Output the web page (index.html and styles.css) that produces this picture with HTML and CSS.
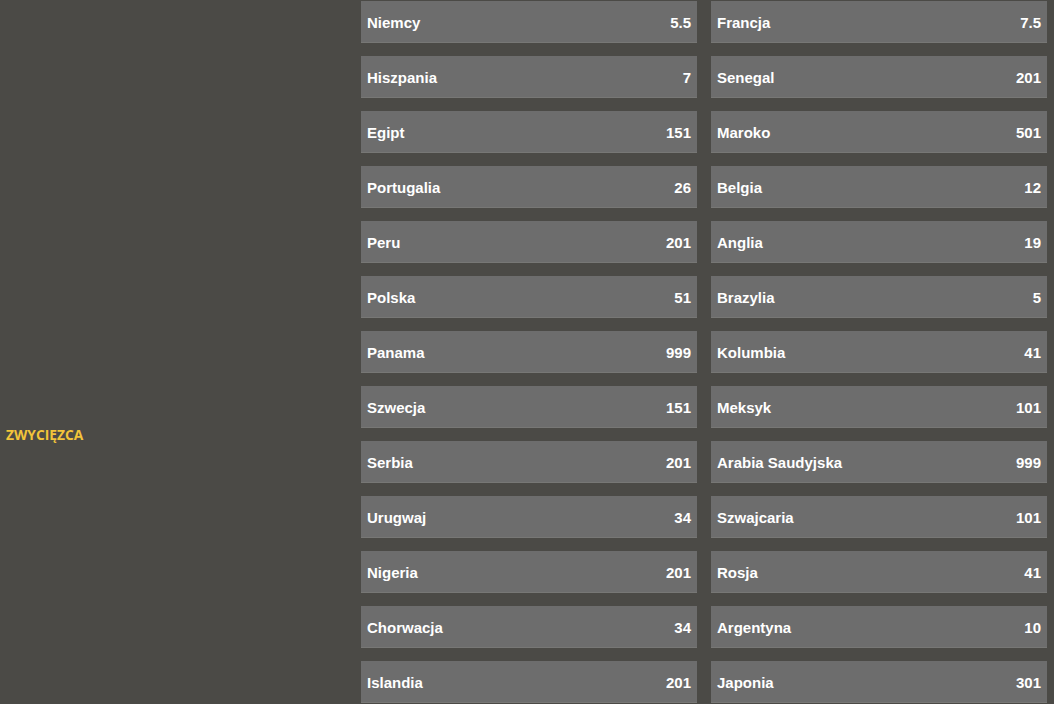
FILE: index.html
```html
<!DOCTYPE html>
<html>
    <head>
        <meta charset="utf-8">
        <link rel="stylesheet" href="styles.css">
    </head>
    <body>
        <div class="page">
            <div class="label">ZWYCIĘZCA</div>
            <div class="grid">
                <div class="cell"><span>Niemcy</span><span>5.5</span></div>
                <div class="cell"><span>Francja</span><span>7.5</span></div>
                <div class="cell"><span>Hiszpania</span><span>7</span></div>
                <div class="cell"><span>Senegal</span><span>201</span></div>
                <div class="cell"><span>Egipt</span><span>151</span></div>
                <div class="cell"><span>Maroko</span><span>501</span></div>
                <div class="cell"><span>Portugalia</span><span>26</span></div>
                <div class="cell"><span>Belgia</span><span>12</span></div>
                <div class="cell"><span>Peru</span><span>201</span></div>
                <div class="cell"><span>Anglia</span><span>19</span></div>
                <div class="cell"><span>Polska</span><span>51</span></div>
                <div class="cell"><span>Brazylia</span><span>5</span></div>
                <div class="cell"><span>Panama</span><span>999</span></div>
                <div class="cell"><span>Kolumbia</span><span>41</span></div>
                <div class="cell"><span>Szwecja</span><span>151</span></div>
                <div class="cell"><span>Meksyk</span><span>101</span></div>
                <div class="cell"><span>Serbia</span><span>201</span></div>
                <div class="cell"><span>Arabia Saudyjska</span><span>999</span></div>
                <div class="cell"><span>Urugwaj</span><span>34</span></div>
                <div class="cell"><span>Szwajcaria</span><span>101</span></div>
                <div class="cell"><span>Nigeria</span><span>201</span></div>
                <div class="cell"><span>Rosja</span><span>41</span></div>
                <div class="cell"><span>Chorwacja</span><span>34</span></div>
                <div class="cell"><span>Argentyna</span><span>10</span></div>
                <div class="cell"><span>Islandia</span><span>201</span></div>
                <div class="cell"><span>Japonia</span><span>301</span></div>
            </div>
        </div>
    </body>
</html>
```

FILE: styles.css
```css
body{
    margin: 0;
    background-color: #4b4a46;
    overflow: hidden;
}

.page{
    display: flex;
    height: 704px;
}

.label{
    width: 361px;
    box-sizing: border-box;
    padding: 425px 0 0 6px;
    font-family: "Open Sans", sans-serif;
    font-weight: bold;
    font-size: 13.8px;
    color: #f2c43a;
}

.grid{
    display: grid;
    grid-template-columns: 336px 336px;
    grid-auto-rows: 42px;
    column-gap: 14px;
    row-gap: 13px;
    padding-top: 1px;
}

.cell{
    display: flex;
    justify-content: space-between;
    align-items: center;
    padding: 2px 6px 0;
    background-color: #6d6d6d;
    border-bottom: 1px solid #777775;
    font-family: "Liberation Sans", Arial, sans-serif;
    font-weight: bold;
    font-size: 15px;
    color: #ffffff;
}
```
